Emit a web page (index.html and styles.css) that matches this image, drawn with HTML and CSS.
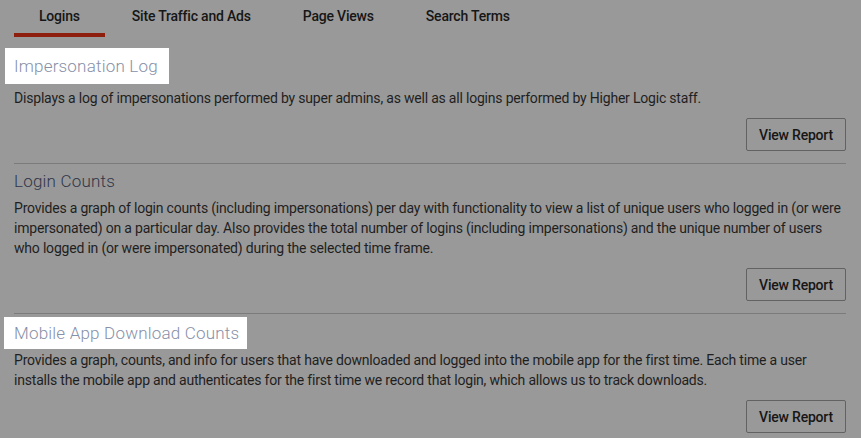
FILE: index.html
```html
<!DOCTYPE html>
<html lang="en">
<head>
    <meta charset="UTF-8">
    <title>Reports</title>
    <link rel="stylesheet" href="styles.css">
</head>
<body>
<div class="page">
    <ul class="tabs">
        <li class="tab active">Logins</li>
        <li class="tab">Site Traffic and Ads</li>
        <li class="tab">Page Views</li>
        <li class="tab">Search Terms</li>
    </ul>

    <div class="report report-first">
        <h3 class="report-title highlight">Impersonation Log</h3>
        <p class="report-desc">Displays a log of impersonations performed by super admins, as well as all logins performed by Higher Logic staff.</p>
        <div class="report-actions"><button class="btn" type="button">View Report</button></div>
    </div>

    <div class="report">
        <h3 class="report-title">Login Counts</h3>
        <p class="report-desc">Provides a graph of login counts (including impersonations) per day with functionality to view a list of unique users who logged in (or were impersonated) on a particular day. Also provides the total number of logins (including impersonations) and the unique number of users who logged in (or were impersonated) during the selected time frame.</p>
        <div class="report-actions"><button class="btn" type="button">View Report</button></div>
    </div>

    <div class="report">
        <h3 class="report-title highlight">Mobile App Download Counts</h3>
        <p class="report-desc">Provides a graph, counts, and info for users that have downloaded and logged into the mobile app for the first time. Each time a user installs the mobile app and authenticates for the first time we record that login, which allows us to track downloads.</p>
        <div class="report-actions"><button class="btn" type="button">View Report</button></div>
    </div>
</div>
</body>
</html>
```

FILE: styles.css
```css
* {
    margin: 0;
    padding: 0;
    list-style: none;
    box-sizing: border-box;
}

body{
    background: #999;
    font-family: Roboto, "Liberation Sans", sans-serif;
    color: #1f1f1f;
}
.page{
    padding: 0 15px 0 14px;
}

/* tabs */
.tabs{
    display: flex;
    gap: 2px;
    height: 37px;
}
.tabs .tab{
    padding: 6px 25px 7px;
    line-height: 20px;
    font-size: 14px;
    font-weight: 500;
    letter-spacing: -0.2px;
    border-bottom: 4px solid transparent;
    color: #161616;
}
.tabs .tab.active{
    border-bottom-color: #8e1e0d;
}

/* report blocks */
.report{
    padding-bottom: 12px;
}
.report + .report{
    border-top: 1px solid #7b7b7b;
}
.report-title{
    margin-top: 5px;
    font-size: 17px;
    font-weight: 300;
    line-height: 24px;
    letter-spacing: 0.2px;
    color: #303648;
}
.report-first .report-title{
    margin-top: 17px;
}

/* tour highlight on a title */
.report-title.highlight{
    width: fit-content;
    background: #fff;
    color: #8790a8;
    padding: 4px 8px 4px 10px;
    margin: 3px 0 -4px -10px;
}
.report-first .report-title.highlight{
    padding: 6px 11px 6px 9px;
    margin: 11px 0 -6px -9px;
}

.report-desc{
    margin-top: 5px;
    font-size: 14px;
    line-height: 20px;
    letter-spacing: -0.2px;
}
.report-first .report-desc{
    margin-top: 10px;
}
.report-actions{
    display: flex;
    justify-content: flex-end;
    margin-top: 10px;
}
.btn{
    height: 33px;
    width: 100px;
    background: transparent;
    border: 1px solid #626262;
    border-radius: 2px;
    font-family: Roboto, "Liberation Sans", sans-serif;
    font-size: 14px;
    font-weight: 500;
    letter-spacing: -0.2px;
    color: #161616;
}
```
